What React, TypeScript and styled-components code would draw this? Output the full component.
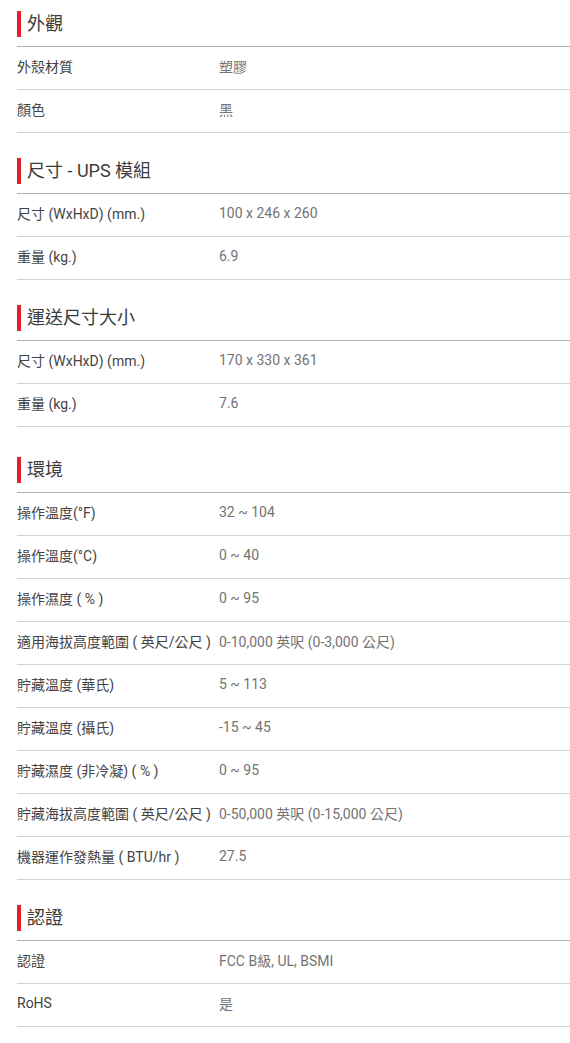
import React from 'react';
import styled, { createGlobalStyle } from 'styled-components';

const GlobalStyle = createGlobalStyle`
  html, body {
    margin: 0;
    padding: 0;
    background: #fff;
  }
  body {
    font-family: Roboto, "Noto Sans CJK TC", sans-serif;
    -webkit-font-smoothing: antialiased;
  }
`;

type Row = [string, string];

interface SpecGroup {
  title: string;
  rows: Row[];
  gap: number;
}

const specs: SpecGroup[] = [
  {
    title: '外觀',
    gap: 0,
    rows: [
      ['外殼材質', '塑膠'],
      ['顏色', '黑'],
    ],
  },
  {
    title: '尺寸 - UPS 模組',
    gap: 25,
    rows: [
      ['尺寸 (WxHxD) (mm.)', '100 x 246 x 260'],
      ['重量 (kg.)', '6.9'],
    ],
  },
  {
    title: '運送尺寸大小',
    gap: 25,
    rows: [
      ['尺寸 (WxHxD) (mm.)', '170 x 330 x 361'],
      ['重量 (kg.)', '7.6'],
    ],
  },
  {
    title: '環境',
    gap: 30,
    rows: [
      ['操作溫度(°F)', '32 ~ 104'],
      ['操作溫度(°C)', '0 ~ 40'],
      ['操作濕度 ( % )', '0 ~ 95'],
      ['適用海拔高度範圍 ( 英尺/公尺 )', '0-10,000 英呎 (0-3,000 公尺)'],
      ['貯藏溫度 (華氏)', '5 ~ 113'],
      ['貯藏溫度 (攝氏)', '-15 ~ 45'],
      ['貯藏濕度 (非冷凝) ( % )', '0 ~ 95'],
      ['貯藏海拔高度範圍 ( 英尺/公尺 )', '0-50,000 英呎 (0-15,000 公尺)'],
      ['機器運作發熱量 ( BTU/hr )', '27.5'],
    ],
  },
  {
    title: '認證',
    gap: 25,
    rows: [
      ['認證', 'FCC B級, UL, BSMI'],
      ['RoHS', '是'],
    ],
  },
];

const Page = styled.div`
  padding: 11px 0 16px 17px;
`;

const Section = styled.section<{ $gap: number }>`
  margin-top: ${(p) => p.$gap}px;
`;

const Header = styled.div`
  padding-bottom: 9px;
  border-bottom: 1px solid #b0b0b0;
`;

const Title = styled.h3`
  margin: 0;
  border-left: 4px solid #e3202c;
  padding-left: 6px;
  height: 26px;
  line-height: 26px;
  font-size: 18px;
  font-weight: 400;
  color: #3c3c3c;
`;

const SpecRow = styled.div`
  display: grid;
  grid-template-columns: 202px 1fr;
  align-items: center;
  height: 37px;
  padding-bottom: 5px;
  border-bottom: 1px solid #d2d2d2;
  font-size: 14px;
`;

const Label = styled.div`
  color: #444;
  white-space: nowrap;
`;

const Value = styled.div`
  color: #737373;
  white-space: nowrap;
`;

export default function App() {
  return (
    <>
      <GlobalStyle />
      <Page>
        {specs.map((group) => (
          <Section key={group.title} $gap={group.gap}>
            <Header>
              <Title>{group.title}</Title>
            </Header>
            {group.rows.map(([label, value]) => (
              <SpecRow key={label}>
                <Label>{label}</Label>
                <Value>{value}</Value>
              </SpecRow>
            ))}
          </Section>
        ))}
      </Page>
    </>
  );
}
